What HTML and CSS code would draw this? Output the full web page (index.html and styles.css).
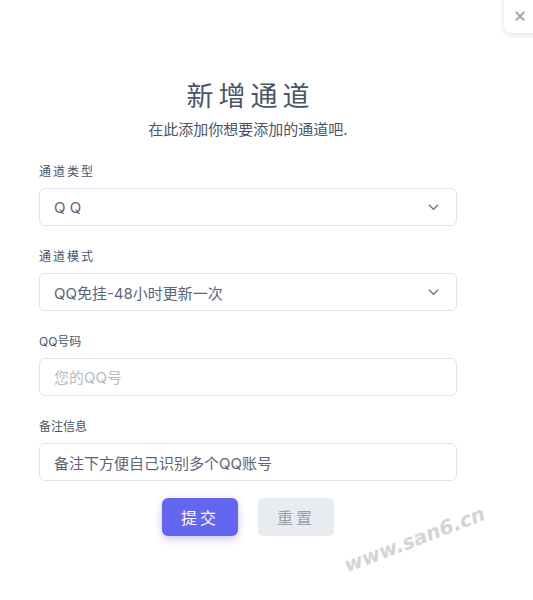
FILE: index.html
```html
<!DOCTYPE html>
<html lang="zh-CN">
<head>
    <meta charset="UTF-8">
    <meta name="viewport" content="width=device-width, initial-scale=1.0">
    <title>新增通道</title>
    <link rel="stylesheet" href="styles.css">
</head>
<body>
    <div class="close-btn">&times;</div>

    <div class="container">
        <h1>新增通道</h1>
        <p class="subtitle">在此添加你想要添加的通道吧.</p>

        <div class="field">
            <label class="spaced">通道类型</label>
            <div class="select">
                <span>Q Q</span>
                <svg class="chevron" viewBox="0 0 12 8"><path d="M1 1.5l5 5 5-5"/></svg>
            </div>
        </div>

        <div class="field">
            <label class="spaced">通道模式</label>
            <div class="select">
                <span>QQ免挂-48小时更新一次</span>
                <svg class="chevron" viewBox="0 0 12 8"><path d="M1 1.5l5 5 5-5"/></svg>
            </div>
        </div>

        <div class="field">
            <label>QQ号码</label>
            <input type="text" placeholder="您的QQ号">
        </div>

        <div class="field">
            <label>备注信息</label>
            <input type="text" value="备注下方便自己识别多个QQ账号">
        </div>

        <div class="actions">
            <button class="primary">提交</button>
            <button class="secondary">重置</button>
        </div>
    </div>

    <div class="watermark">www.san6.cn</div>
</body>
</html>
```

FILE: styles.css
```css
body {
    font-family: 'Inter', 'Noto Sans CJK SC', sans-serif;
    background-color: #ffffff;
    margin: 0;
    min-height: 600px;
    position: relative;
    overflow: hidden;
}
.close-btn {
    position: absolute;
    top: -10px;
    right: -12px;
    width: 41px;
    height: 43px;
    background: #fff;
    border-radius: 8px;
    box-shadow: 0 2px 6px rgba(0, 0, 0, 0.12);
    color: #94a3b8;
    font-size: 21px;
    line-height: 1;
    box-sizing: border-box;
    padding: 14px 0 0 9px;
}
.container {
    width: 418px;
    margin: 0 0 0 39px;
    padding-top: 78px;
}
h1 {
    margin: 0;
    text-align: center;
    font-size: 27px;
    font-weight: 400;
    letter-spacing: 5px;
    color: #4a5568;
    line-height: 38px;
    padding-left: 5px;
}
.subtitle {
    margin: 3px 0 0;
    text-align: center;
    font-size: 15px;
    color: #4a5568;
    line-height: 22px;
}
.field {
    margin-top: 23px;
}
.field + .field {
    margin-top: 23px;
}
label {
    display: block;
    font-size: 12px;
    color: #4a5568;
    line-height: 16px;
    margin-bottom: 8px;
}
label.spaced {
    letter-spacing: 2px;
}
.select, input {
    display: flex;
    align-items: center;
    justify-content: space-between;
    width: 100%;
    height: 38px;
    box-sizing: border-box;
    border: 1px solid #dfe3e8;
    border-radius: 6px;
    padding: 0 14px;
    font-family: inherit;
    font-size: 15px;
    color: #5b6577;
    background: #fff;
    margin: 0;
}
input::placeholder {
    color: #b4bac4;
}
.chevron {
    width: 11px;
    height: 8px;
    fill: none;
    stroke: #6b7280;
    stroke-width: 1.3;
    margin-right: 3px;
}
.actions {
    display: flex;
    justify-content: center;
    gap: 20px;
    margin-top: 17px;
}
button {
    width: 76px;
    height: 38px;
    border: none;
    border-radius: 6px;
    font-family: inherit;
    font-size: 16px;
    letter-spacing: 3px;
    padding-left: 6px;
    cursor: pointer;
}
.primary {
    background-color: #6366f1;
    color: #fff;
    box-shadow: 0 3px 8px rgba(99, 102, 241, 0.35);
}
.secondary {
    background-color: #e8ebef;
    color: #9aa1ab;
}
.watermark {
    position: absolute;
    left: 345px;
    top: 554px;
    font-family: 'DejaVu Sans', sans-serif;
    font-size: 20px;
    font-weight: bold;
    font-style: italic;
    color: #d4d4d4;
    transform: rotate(-21deg);
    transform-origin: left center;
    pointer-events: none;
}
```
